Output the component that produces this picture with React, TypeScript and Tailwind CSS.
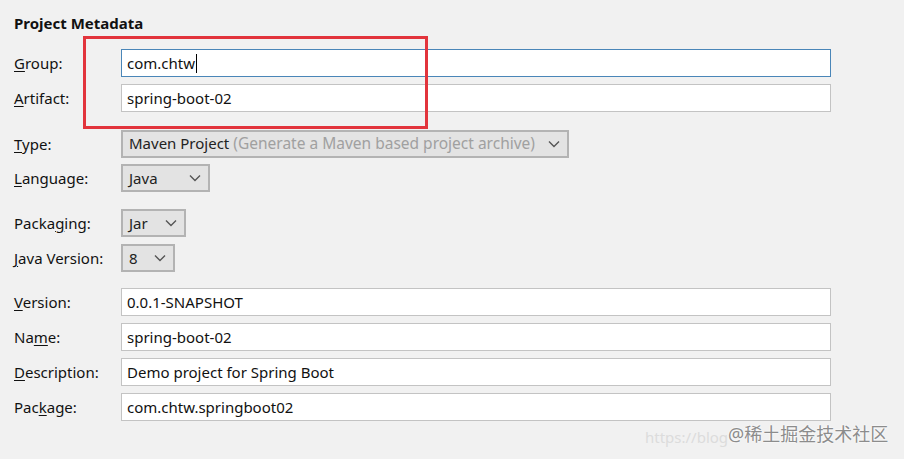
import React from "react";

const font = { fontFamily: '"Noto Sans", "Open Sans", sans-serif' };

function Chevron() {
  return (
    <svg width="12" height="8" viewBox="0 0 12 8" className="shrink-0">
      <path d="M1 1.5 L6 6.5 L11 1.5" fill="none" stroke="#555" strokeWidth="1.4" />
    </svg>
  );
}

function Label({ pre, u, post }: { pre?: string; u: string; post: string }) {
  return (
    <div className="w-[107px] shrink-0 text-[15px] text-[#111]">
      {pre}
      <span className="underline decoration-1 underline-offset-2">{u}</span>
      {post}
    </div>
  );
}

function TextRow({
  label,
  value,
  focused,
  className,
}: {
  label: React.ReactNode;
  value: string;
  focused?: boolean;
  className?: string;
}) {
  return (
    <div className={"flex items-center " + (className ?? "")}>
      {label}
      <div
        className={
          "relative flex h-[28px] w-[710px] items-center bg-white pl-[5px] text-[15px] text-[#111] " +
          (focused ? "border border-[#4a86b8]" : "border border-[#c3c3c3]")
        }
      >
        <span>{value}</span>
        {focused && <span className="ml-[1px] inline-block h-[19px] w-[1px] bg-black" />}
      </div>
    </div>
  );
}

function SelectRow({
  label,
  value,
  hint,
  width,
  className,
}: {
  label: React.ReactNode;
  value: string;
  hint?: string;
  width: string;
  className?: string;
}) {
  return (
    <div className={"flex items-center " + (className ?? "")}>
      {label}
      <div
        className={
          "flex h-[28px] items-center justify-between border-2 border-[#b3b3b3] bg-[#e3e3e3] pl-[6px] pr-[7px] text-[15px] text-[#222] " +
          width
        }
      >
        <span className="whitespace-nowrap">
          {value}
          {hint && <span className="text-[15.5px] text-[#a0a0a0]"> {hint}</span>}
        </span>
        <Chevron />
      </div>
    </div>
  );
}

export default function App() {
  return (
    <div className="relative h-[459px] w-[904px] overflow-hidden bg-[#f1f1f1]" style={font}>
      <div className="px-[14px] pt-[12px]">
        <div className="text-[15px] font-bold leading-[22px] text-[#111]">Project Metadata</div>

        <TextRow className="mt-[15px]" label={<Label u="G" post="roup:" />} value="com.chtw" focused />
        <TextRow className="mt-[7px]" label={<Label u="A" post="rtifact:" />} value="spring-boot-02" />

        <SelectRow
          className="mt-[18px]"
          label={<Label u="T" post="ype:" />}
          value="Maven Project"
          hint="(Generate a Maven based project archive)"
          width="w-[448px]"
        />
        <SelectRow className="mt-[6px]" label={<Label u="L" post="anguage:" />} value="Java" width="w-[89px]" />

        <SelectRow className="mt-[17px]" label={<Label pre="Packa" u="g" post="ing:" />} value="Jar" width="w-[65px]" />
        <SelectRow className="mt-[7px]" label={<Label u="J" post="ava Version:" />} value="8" width="w-[54px]" />

        <TextRow className="mt-[16px]" label={<Label u="V" post="ersion:" />} value="0.0.1-SNAPSHOT" />
        <TextRow className="mt-[7px]" label={<Label pre="Na" u="m" post="e:" />} value="spring-boot-02" />
        <TextRow className="mt-[7px]" label={<Label u="D" post="escription:" />} value="Demo project for Spring Boot" />
        <TextRow className="mt-[7px]" label={<Label pre="Pac" u="k" post="age:" />} value="com.chtw.springboot02" />
      </div>

      {/* red annotation box */}
      <div className="absolute left-[83px] top-[36px] h-[93px] w-[345px] border-[3px] border-[#e2343c]" />

      {/* watermark */}
      <div className="absolute left-[645px] top-[426px] whitespace-nowrap text-[15px] text-[#dcdcdc]">
        https://blog
      </div>
      <div
        className="absolute left-[728px] top-[421px] whitespace-nowrap text-[18px] text-[#8c8c8c]"
        style={{ fontFamily: '"Noto Sans", "Noto Sans CJK SC", sans-serif', textShadow: "0 0 2px #fff, 0 0 2px #fff" }}
      >
        @稀土掘金技术社区
      </div>
    </div>
  );
}
